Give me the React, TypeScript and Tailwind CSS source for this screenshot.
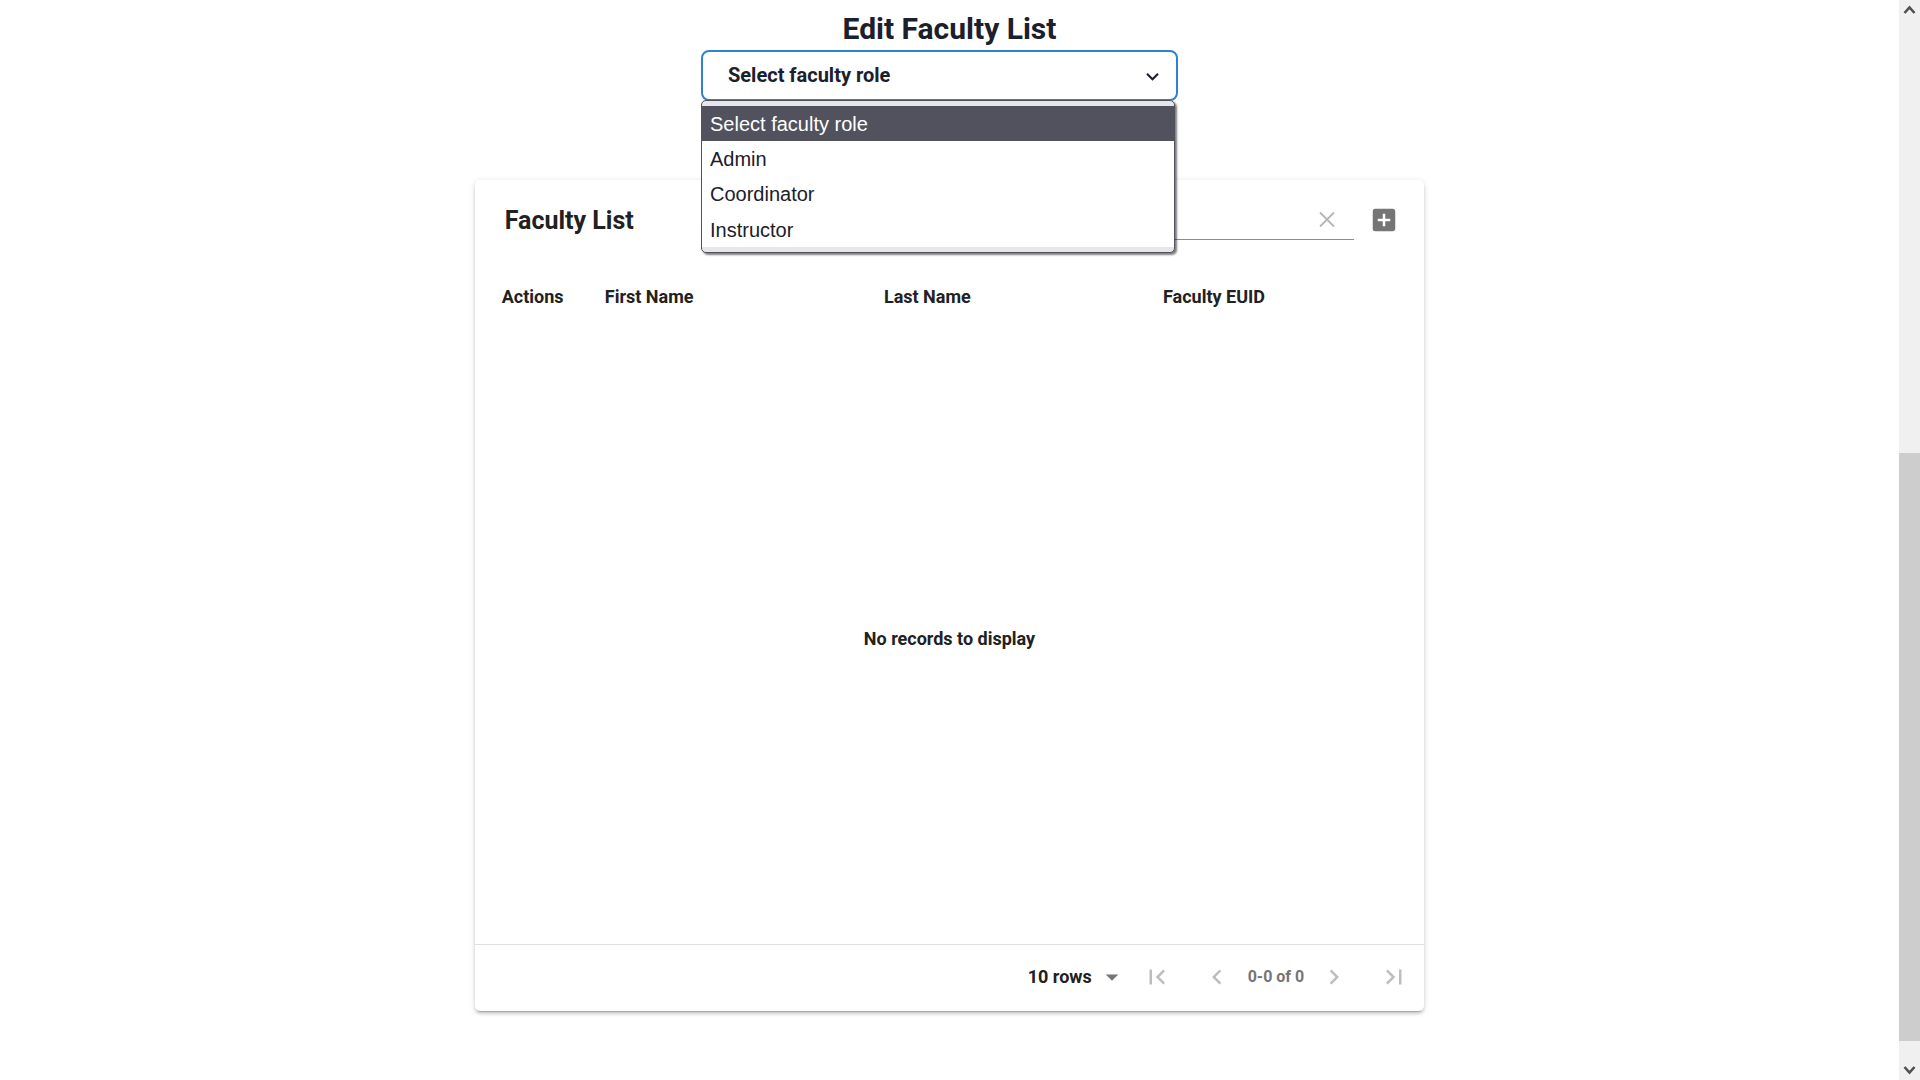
import type { ReactNode } from "react";
import {
  MdAddBox,
  MdArrowDropDown,
  MdChevronLeft,
  MdChevronRight,
  MdFirstPage,
  MdLastPage,
} from "react-icons/md";

const roles = ["Select faculty role", "Admin", "Coordinator", "Instructor"];

function RolePicker() {
  return (
    <div className="relative mr-5 w-1/4 min-w-[477px]">
      <select
        aria-label="Faculty role"
        className="block h-[51px] w-full appearance-none rounded-lg border-2 border-[#3182ce] bg-white pl-[25px] pr-10 pb-px text-xl font-bold text-[#1a202c] outline-none"
      >
        {roles.map((role) => (
          <option key={role}>{role}</option>
        ))}
      </select>
      <svg
        viewBox="0 0 24 24"
        aria-hidden="true"
        className="pointer-events-none absolute right-[13px] top-[14px] size-[25px] text-[#1a202c]"
      >
        <path fill="currentColor" d="M16.59 8.59L12 13.17 7.41 8.59 6 10l6 6 6-6z" />
      </svg>
      <ul className="absolute left-0 right-[3px] top-[50px] z-10 rounded-[5px] border border-[#52525e] bg-[#e6e6eb] py-[5px] font-['Liberation_Sans',sans-serif] text-xl leading-[33px] text-[#1a202c] shadow-[2px_2px_2px_rgba(0,0,0,0.5)]">
        {roles.map((role, i) => (
          <li
            key={role}
            className={
              i === 0
                ? "bg-[#52525e] pt-0.5 pl-2 text-white"
                : "bg-white pt-0.5 pl-2 last:pt-[3px]"
            }
          >
            {role}
          </li>
        ))}
      </ul>
    </div>
  );
}

function PageButton({ label, children }: { label: string; children: ReactNode }) {
  return (
    <button
      type="button"
      aria-label={label}
      className="flex size-[60px] items-center justify-center text-[30px] text-[#bdbdbd]"
    >
      {children}
    </button>
  );
}

function FacultyCard() {
  return (
    <section className="mt-[79px] w-1/2 rounded-[5px] bg-white text-[#212121] shadow-[0_4px_1px_-3px_rgba(0,0,0,0.2),0_3px_3px_rgba(0,0,0,0.14),0_1px_6px_rgba(0,0,0,0.12)]">
      <div className="flex h-20 items-center pl-[30px] pr-[10px]">
        <h2 className="grow pt-0.5 text-[25px] font-bold">Faculty List</h2>
        <div className="flex h-10 w-[280px] items-center border-b border-[#8d8d8d]">
          <input aria-label="Search" className="min-w-0 grow outline-none" />
          <button
            type="button"
            aria-label="Clear search"
            className="flex w-[54px] items-center justify-center text-[#b5b5b5]"
          >
            <svg viewBox="0 0 24 24" className="size-6" aria-hidden="true">
              <path d="M5 4.5l14 14M19 4.5L5 18.5" stroke="currentColor" strokeWidth="1.8" fill="none" />
            </svg>
          </button>
        </div>
        <button
          type="button"
          aria-label="Add faculty"
          className="flex size-[60px] items-center justify-center text-[30px] text-[#757575]"
        >
          <MdAddBox />
        </button>
      </div>

      <table className="w-full table-fixed text-left text-[18px] font-bold">
        <thead>
          <tr className="h-[73px]">
            <th className="w-[110px] pl-[27px]">Actions</th>
            <th className="w-[29.4%] pl-5">First Name</th>
            <th className="w-[29.4%] pl-5">Last Name</th>
            <th className="pl-5">Faculty EUID</th>
          </tr>
        </thead>
        <tbody>
          <tr className="h-[611px]">
            <td colSpan={4} className="text-center">
              No records to display
            </td>
          </tr>
        </tbody>
      </table>

      <div className="flex h-[67px] items-center justify-end border-t border-[#e0e0e0] pb-[3px]">
        <div className="relative">
          <select
            aria-label="Rows per page"
            className="block h-7 w-[99px] appearance-none pb-0.5 text-[18px] font-bold outline-none"
          >
            <option>10 rows</option>
          </select>
          <MdArrowDropDown className="pointer-events-none absolute right-0 -top-px text-[30px] text-[#757575]" />
        </div>
        <PageButton label="First page">
          <MdFirstPage />
        </PageButton>
        <PageButton label="Previous page">
          <MdChevronLeft />
        </PageButton>
        <span className="pl-px text-base font-bold text-[#757575]">0-0 of 0</span>
        <PageButton label="Next page">
          <MdChevronRight />
        </PageButton>
        <PageButton label="Last page">
          <MdLastPage />
        </PageButton>
      </div>
    </section>
  );
}

function ScrollArrow({ d }: { d: string }) {
  return (
    <svg viewBox="0 0 21 21" className="size-[21px] shrink-0" aria-hidden="true">
      <path d={d} stroke="#505050" strokeWidth="2.6" fill="none" />
    </svg>
  );
}

function ScrollRail() {
  return (
    <div className="flex w-[21px] shrink-0 flex-col bg-[#f0f0f0]">
      <ScrollArrow d="M5.5 13l5-5.5 5 5.5" />
      <div className="grow-[432]" />
      <div className="grow-[588] bg-[#cdcdcd]" />
      <div className="grow-[18]" />
      <ScrollArrow d="M5.5 8l5 5.5 5-5.5" />
    </div>
  );
}

export default function App() {
  return (
    <div className="flex h-screen bg-white font-['Roboto',sans-serif]">
      <main className="flex grow flex-col items-center overflow-hidden pt-2">
        <h1 className="text-3xl leading-[42px] font-bold text-[#1a202c]">Edit Faculty List</h1>
        <RolePicker />
        <FacultyCard />
      </main>
      <ScrollRail />
    </div>
  );
}
